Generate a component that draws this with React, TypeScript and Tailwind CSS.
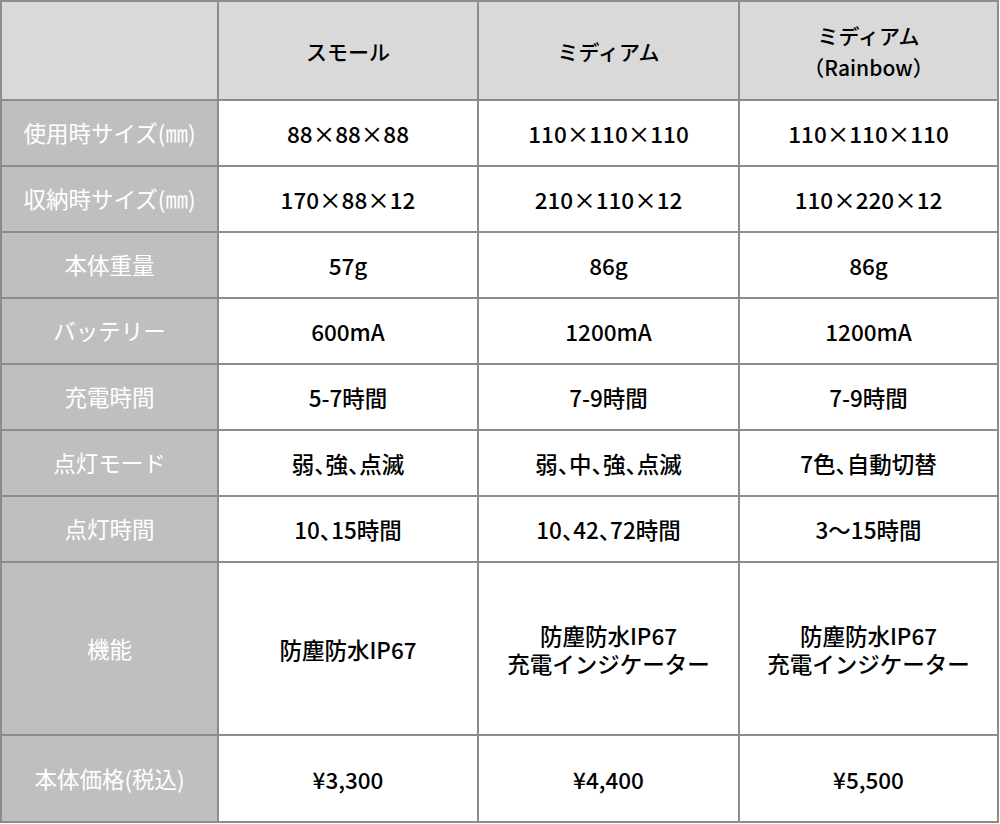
const headers = ["スモール", "ミディアム", "ミディアム\n（Rainbow）"];

const rows = [
  { label: "使用時サイズ(㎜)", values: ["88×88×88", "110×110×110", "110×110×110"], h: "h-[66px]" },
  { label: "収納時サイズ(㎜)", values: ["170×88×12", "210×110×12", "110×220×12"], h: "h-[66px]" },
  { label: "本体重量", values: ["57g", "86g", "86g"], h: "h-[66px]" },
  { label: "バッテリー", values: ["600mA", "1200mA", "1200mA"], h: "h-[66px]" },
  { label: "充電時間", values: ["5-7時間", "7-9時間", "7-9時間"], h: "h-[66px]" },
  { label: "点灯モード", values: ["弱、強、点滅", "弱、中、強、点滅", "7色、自動切替"], h: "h-[66px]" },
  { label: "点灯時間", values: ["10、15時間", "10、42、72時間", "3～15時間"], h: "h-[66px]" },
  {
    label: "機能",
    values: ["防塵防水IP67", "防塵防水IP67\n充電インジケーター", "防塵防水IP67\n充電インジケーター"],
    h: "h-[173px]",
  },
  { label: "本体価格(税込)", values: ["¥3,300", "¥4,400", "¥5,500"], h: "h-[87px]" },
];

const font = { fontFamily: '"Noto Sans CJK JP", "Noto Sans", sans-serif' };

// narrow the ideographic comma like the original's proportional punctuation
const Text = ({ value }: { value: string }) => {
  const parts = value.split("、");
  return (
    <>
      {parts.map((p, i) => (
        <span key={i}>
          {p}
          {i < parts.length - 1 && <span className="[font-feature-settings:'halt']">、</span>}
        </span>
      ))}
    </>
  );
};

const App = () => {
  return (
    <div className="w-[1000px] h-[824px] bg-white" style={font}>
      <div className="grid grid-cols-[217px_260px_261px_259px] w-[999px] border-l-2 border-t-2 border-[#8c8c8c]">
        <div className="h-[99px] bg-[#d9d9d9] border-r-2 border-b-2 border-[#8c8c8c]" />
        {headers.map((h, i) => (
          <div
            key={i}
            className="h-[99px] bg-[#d9d9d9] border-r-2 border-b-2 border-[#8c8c8c] flex items-center justify-center text-center whitespace-pre-line text-[21px] leading-[32px] font-medium text-black"
          >
            {h}
          </div>
        ))}
        {rows.map((row, r) => (
          <div key={r} className="contents">
            <div
              className={`${row.h} bg-[#bfbfbf] border-r-2 border-b-2 border-[#8c8c8c] flex items-center justify-center text-white text-[22.5px]`}
            >
              {row.label}
            </div>
            {row.values.map((v, i) => (
              <div
                key={i}
                className={`${row.h} bg-white border-r-2 border-b-2 border-[#8c8c8c] flex items-center justify-center text-center whitespace-pre-line text-[22.5px] leading-[28px] font-medium text-black`}
              >
                <Text value={v} />
              </div>
            ))}
          </div>
        ))}
      </div>
    </div>
  );
};

export default App;
